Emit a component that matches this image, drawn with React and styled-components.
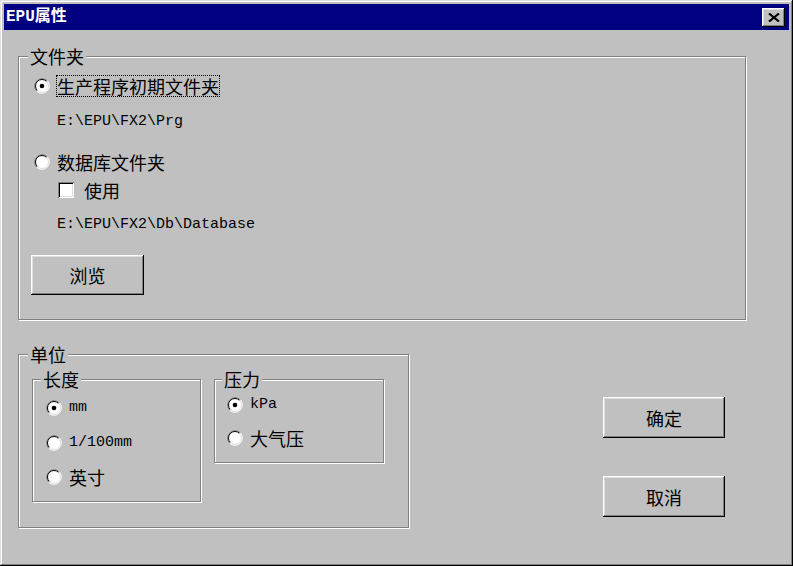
import React from "react";
import styled, { createGlobalStyle } from "styled-components";

const GlobalStyle = createGlobalStyle`
  html, body {
    margin: 0;
    padding: 0;
    background: #c0c0c0;
  }
  * {
    box-sizing: border-box;
  }
`;

const Window = styled.div`
  width: 793px;
  height: 566px;
  padding: 4px;
  background: #c0c0c0;
  box-shadow: inset -1px -1px 0 #000, inset 1px 1px 0 #dfdfdf,
    inset -2px -2px 0 #808080, inset 2px 2px 0 #fff;
  display: flex;
  flex-direction: column;
  font-family: "Noto Sans CJK SC", "Liberation Sans", sans-serif;
  font-size: 18px;
  color: #000;
`;

const TitleBar = styled.div`
  height: 26px;
  background: #000080;
  display: flex;
  align-items: center;
  justify-content: space-between;
  padding: 0 4px 0 2px;
`;

const Title = styled.span`
  color: #fff;
  font-family: "Liberation Mono", "Noto Sans CJK SC", monospace;
  font-size: 16px;
  font-weight: bold;
  line-height: 18px;
`;

const CloseButton = styled.button`
  width: 23px;
  height: 19px;
  padding: 0;
  border: none;
  background: #c0c0c0;
  display: flex;
  align-items: center;
  justify-content: center;
  box-shadow: inset -1px -1px 0 #000, inset 1px 1px 0 #fff,
    inset -2px -2px 0 #808080, inset 2px 2px 0 #dfdfdf;
`;

const Main = styled.div`
  flex: 1;
  display: flex;
  flex-direction: column;
  padding: 17px 0 0 14px;
`;

const Group = styled.fieldset`
  margin: 0;
  padding: 0;
  min-width: 0;
  width: ${(p) => p.$w}px;
  border: 1px solid #808080;
  box-shadow: inset 1px 1px 0 #fff, 1px 1px 0 #fff;
`;

const Legend = styled.legend`
  margin-left: ${(p) => p.$offset ?? 8}px;
  padding: 0 2px;
  font-size: 18px;
  line-height: 18px;
  background: #c0c0c0;
`;

const GroupBody = styled.div`
  display: flex;
  flex-direction: ${(p) => (p.$row ? "row" : "column")};
  align-items: flex-start;
  gap: ${(p) => p.$gap ?? 0}px;
  padding: ${(p) => p.$pad};
`;

const Option = styled.label`
  display: flex;
  align-items: center;
  gap: ${(p) => p.$gap ?? 6}px;
  height: ${(p) => p.$h ?? 20}px;
  margin: ${(p) => p.$m ?? "0"};
`;

const OptionText = styled.span`
  border: 1px dotted ${(p) => (p.$focus ? "#000" : "transparent")};
  line-height: 20px;
  white-space: nowrap;
  font-family: ${(p) =>
    p.$ascii ? '"Liberation Mono", monospace' : "inherit"};
  font-size: ${(p) => (p.$ascii ? 15 : 18)}px;
`;

const RadioBox = styled.span`
  width: 16px;
  height: 16px;
  display: inline-flex;
  flex: none;
`;

const CheckBox = styled.span`
  width: 16px;
  height: 16px;
  flex: none;
  background: #fff;
  box-shadow: inset 1px 1px 0 #808080, inset -1px -1px 0 #fff,
    inset 2px 2px 0 #000, inset -2px -2px 0 #dfdfdf;
`;

const Path = styled.div`
  font-family: "Liberation Mono", monospace;
  font-size: 15px;
  line-height: 16px;
  height: 16px;
  white-space: nowrap;
  margin: ${(p) => p.$m};
`;

const Button = styled.button`
  width: ${(p) => p.$w}px;
  height: ${(p) => p.$h}px;
  margin: ${(p) => p.$m ?? "0"};
  padding: 0;
  border: none;
  background: #c0c0c0;
  color: #000;
  font-family: "Noto Sans CJK SC", sans-serif;
  font-size: 18px;
  box-shadow: inset -1px -1px 0 #000, inset 1px 1px 0 #fff,
    inset -2px -2px 0 #808080, inset 2px 2px 0 #dfdfdf;
`;

const BottomRow = styled.div`
  display: flex;
  justify-content: space-between;
  align-items: flex-start;
  margin-top: 25px;
  padding-right: 64px;
`;

const ButtonColumn = styled.div`
  display: flex;
  flex-direction: column;
  gap: 38px;
  margin-top: 52px;
`;

function Radio({ checked }) {
  return (
    <RadioBox>
      <svg width="16" height="16" viewBox="0 0 16 16">
        <circle cx="8" cy="8" r="7" fill="#fff" />
        <path d="M2.7 13.3 A7.5 7.5 0 0 1 13.3 2.7" fill="none" stroke="#808080" />
        <path d="M13.3 2.7 A7.5 7.5 0 0 1 2.7 13.3" fill="none" stroke="#fff" />
        <path d="M3.4 12.6 A6.5 6.5 0 0 1 12.6 3.4" fill="none" stroke="#000" />
        <path d="M12.6 3.4 A6.5 6.5 0 0 1 3.4 12.6" fill="none" stroke="#dfdfdf" />
        {checked && <circle cx="8" cy="8" r="2.3" fill="#000" />}
      </svg>
    </RadioBox>
  );
}

function RadioOption({ checked, focus, ascii, children, h, m }) {
  return (
    <Option $h={h} $m={m}>
      <Radio checked={checked} />
      <OptionText $focus={focus} $ascii={ascii}>
        {children}
      </OptionText>
    </Option>
  );
}

export default function App() {
  return (
    <>
      <GlobalStyle />
      <Window>
        <TitleBar>
          <Title>EPU属性</Title>
          <CloseButton aria-label="关闭">
            <svg width="12" height="9" viewBox="0 0 12 9">
              <path d="M1 0.5 L11 8.5 M11 0.5 L1 8.5" stroke="#000" strokeWidth="2.2" />
            </svg>
          </CloseButton>
        </TitleBar>

        <Main>
          <Group $w={728}>
            <Legend $offset={9}>文件夹</Legend>
            <GroupBody $pad="10px 0 24px 15px">
              <RadioOption checked focus h={22}>
                生产程序初期文件夹
              </RadioOption>
              <Path $m="17px 0 0 23px">E:\EPU\FX2\Prg</Path>
              <RadioOption h={22} m="21px 0 0 0">
                数据库文件夹
              </RadioOption>
              <Option $h={20} $m="7px 0 0 24px" $gap={9}>
                <CheckBox />
                <OptionText>使用</OptionText>
              </Option>
              <Path $m="17px 0 0 23px">E:\EPU\FX2\Db\Database</Path>
              <Button $w={113} $h={40} $m="22px 0 0 -3px">
                浏览
              </Button>
            </GroupBody>
          </Group>

          <BottomRow>
            <Group $w={391}>
              <Legend $offset={9}>单位</Legend>
              <GroupBody $row $gap={13} $pad="7px 0 25px 13px">
                <Group $w={169}>
                  <Legend>长度</Legend>
                  <GroupBody $gap={14.5} $pad="10px 0 14px 13px">
                    <RadioOption checked ascii>
                      mm
                    </RadioOption>
                    <RadioOption ascii>1/100mm</RadioOption>
                    <RadioOption>英寸</RadioOption>
                  </GroupBody>
                </Group>
                <Group $w={170}>
                  <Legend $offset={7}>压力</Legend>
                  <GroupBody $gap={13} $pad="7px 0 14px 12px">
                    <RadioOption checked ascii>
                      kPa
                    </RadioOption>
                    <RadioOption>大气压</RadioOption>
                  </GroupBody>
                </Group>
              </GroupBody>
            </Group>

            <ButtonColumn>
              <Button $w={122} $h={41}>
                确定
              </Button>
              <Button $w={122} $h={41}>
                取消
              </Button>
            </ButtonColumn>
          </BottomRow>
        </Main>
      </Window>
    </>
  );
}
